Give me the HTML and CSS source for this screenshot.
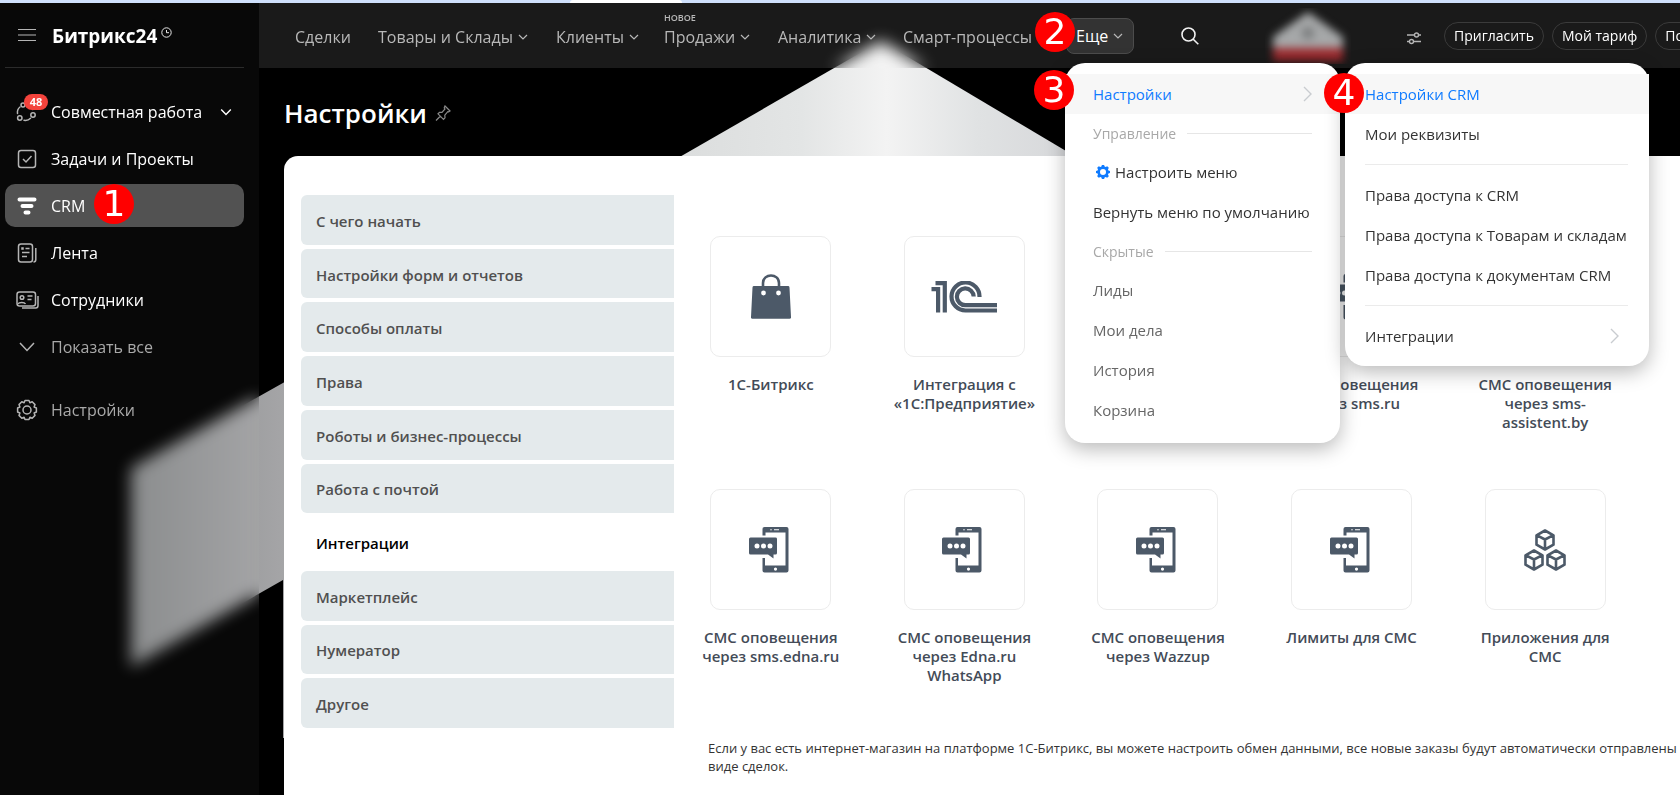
FILE: index.html
```html
<!DOCTYPE html>
<html lang="ru">
<head>
<meta charset="utf-8">
<title>Битрикс24 — Настройки</title>
<link rel="stylesheet" href="styles.css">
</head>
<body>
<svg class="defs" aria-hidden="true">
  <symbol id="chev" viewBox="0 0 10 6"><path d="M1 1l4 4 4-4" fill="none" stroke="currentColor" stroke-width="1.2"/></symbol>
  <symbol id="arrow" viewBox="0 0 9 16"><path d="M1 1l7 7-7 7" fill="none" stroke="currentColor" stroke-width="1.4"/></symbol>
  <symbol id="phone" viewBox="0 0 40 46">
    <path fill="currentColor" fill-rule="evenodd" d="M15.500 0h22a2 2 0 0 1 2 2v41.500a2 2 0 0 1-2 2h-22a2 2 0 0 1-2-2V31h2.500v7.500h20.500V5.500H16.500V8.500h-3V2a2 2 0 0 1 2-2zM22 2a.7.7 0 1 0 0 1.400.7.7 0 1 0 0-1.400zM25 2.200v1h5v-1zM26.500 40.500a1.600 1.600 0 1 0 0 3.200 1.600 1.600 0 1 0 0-3.200z"/>
    <path fill="currentColor" fill-rule="evenodd" d="M1.500 10.500h25a1.500 1.500 0 0 1 1.500 1.500v14a1.500 1.500 0 0 1-1.500 1.500H24.500v4L19 27.500H1.500A1.500 1.500 0 0 1 0 26V12a1.500 1.500 0 0 1 1.500-1.500zM8 16.400a2.500 2.500 0 1 0 0 5 2.500 2.500 0 1 0 0-5zm6.500 0a2.500 2.500 0 1 0 0 5 2.500 2.500 0 1 0 0-5zm6.500 0a2.500 2.500 0 1 0 0 5 2.500 2.500 0 1 0 0-5z"/>
  </symbol>
  <symbol id="cube" viewBox="0 0 20 22"><path d="M10 1.500l8.500 4.800v9.400L10 20.500l-8.500-4.800V6.300zM2 6.300l8 4.200 8-4.200M10 10.500v10" fill="none" stroke="currentColor" stroke-width="2.600" stroke-linejoin="round"/></symbol>
</svg>
<svg class="wallpaper" aria-hidden="true">
  <defs>
    <linearGradient id="roof" x1="0" x2="1"><stop offset="0" stop-color="#d8dada"/><stop offset=".35" stop-color="#e3e5e5"/><stop offset=".52" stop-color="#f3f3f3"/><stop offset=".7" stop-color="#e0e2e3"/><stop offset="1" stop-color="#d0d1d4"/></linearGradient>
    <linearGradient id="wall" x1="0" x2="1"><stop offset="0" stop-color="#888a8b"/><stop offset="1" stop-color="#a6a6a8"/></linearGradient>
  </defs>
  <path d="M881 41L1130 189H624z" fill="url(#roof)"/>
  <path d="M131 468L290 379V738H283V580L131 667z" fill="url(#wall)"/>
</svg>
<div class="browser-edge"><span class="browser-tab"></span></div>
<div class="app">
  <aside class="sidebar">
    <div class="brand">
      <button class="burger" aria-label="Меню"><svg width="18" height="14" viewBox="0 0 18 14"><path d="M0 1.500h18M0 7h18M0 12.500h18" stroke="#b5b5b5" stroke-width="1.200"/></svg></button>
      <a class="logo" href="#">Битрикс24</a>
      <svg class="clock" width="11" height="11" viewBox="0 0 11 11" fill="none" stroke="#e8e8e8"><circle cx="5.500" cy="5.500" r="4.700"/><path d="M5.500 3v2.700H8"/></svg>
    </div>
    <nav class="side-nav">
      <a class="side-link" href="#">
        <span class="side-icon"><svg width="22" height="22" viewBox="0 0 22 22" fill="none" stroke="#b5b5b5" stroke-width="1.500"><circle cx="7" cy="4" r="2"/><circle cx="3.800" cy="17" r="2.200"/><circle cx="17" cy="14" r="2.200"/><path d="M1.500 12.500c-.3-2.500.5-5 2.500-6.500M8 19.300c2.500.4 5-.4 6.500-2M12 3.500c2.500.8 4.300 2.500 4.900 5" stroke-linecap="round"/></svg><span class="counter">48</span></span>
        Совместная работа<svg class="side-chev" width="12" height="8"><use href="#chev"/></svg></a>
      <a class="side-link" href="#">
        <span class="side-icon"><svg width="20" height="20" viewBox="0 0 20 20" fill="none" stroke="#b5b5b5" stroke-width="1.500"><rect x="1.500" y="1.500" width="17" height="17" rx="2.500"/><path d="M6 10l3 3 5.500-6"/></svg></span>
        Задачи и Проекты</a>
      <a class="side-link side-link-active" href="#">
        <span class="side-icon"><svg width="20" height="18" viewBox="0 0 20 18" stroke="#fff" stroke-width="4" stroke-linecap="round"><path d="M2.500 2.500h15M5.500 9h9M8.500 15.500h3"/></svg></span>
        CRM</a>
      <a class="side-link" href="#">
        <span class="side-icon"><svg width="20" height="20" viewBox="0 0 20 20" fill="none" stroke="#b5b5b5" stroke-width="1.500"><rect x="1.500" y="1" width="14" height="18" rx="2.500"/><path d="M18.800 5v11.500c0 1.500-1 2.500-2.300 2.500M8.500 5.500h4M5 9.500h7.500M5 13.500h5"/><rect x="5" y="5" width="1" height="1"/></svg></span>
        Лента</a>
      <a class="side-link" href="#">
        <span class="side-icon"><svg width="23" height="18" viewBox="0 0 23 18" fill="none" stroke="#b5b5b5" stroke-width="1.500"><rect x="1" y="1" width="18.500" height="14" rx="2.500"/><path d="M22 5v9.500c0 1.500-.8 2.500-2.300 2.500H6M11.500 5h5M11.500 8.500h4M2 13c1-2 6.500-2 7.500 0"/><circle cx="6" cy="6.500" r="1.800"/></svg></span>
        Сотрудники</a>
      <a class="side-link side-link-muted" href="#">
        <span class="side-icon"><svg width="16" height="10" viewBox="0 0 16 10"><path d="M1 1l7 7.500L15 1" fill="none" stroke="#b5b5b5" stroke-width="1.500"/></svg></span>
        Показать все</a>
      <a class="side-link side-link-muted side-link-last" href="#">
        <span class="side-icon"><svg width="22" height="22" viewBox="0 0 22 22" fill="none" stroke="#b5b5b5" stroke-width="1.500"><circle cx="11" cy="11" r="4"/><path stroke-linejoin="round" d="M9 1.500h4l.9 2.200 2.300-.9 2.800 2.800-.9 2.400 2.300 1v4l-2.300 1 .9 2.400-2.800 2.800-2.300-.9-.9 2.200H9l-.9-2.200-2.300.9L3 16.400l.9-2.400-2.300-1V9l2.300-1L3 5.600l2.800-2.800 2.300.9z"/></svg></span>
        Настройки</a>
    </nav>
  </aside>
  <div class="content">
    <header class="topbar">
      <nav class="top-nav">
        <a class="top-link" href="#">Сделки</a>
        <a class="top-link" href="#">Товары и Склады<svg width="10" height="6"><use href="#chev"/></svg></a>
        <a class="top-link" href="#">Клиенты<svg width="10" height="6"><use href="#chev"/></svg></a>
        <a class="top-link" href="#"><span class="new-mark">НОВОЕ</span>Продажи<svg width="10" height="6"><use href="#chev"/></svg></a>
        <a class="top-link" href="#">Аналитика<svg width="10" height="6"><use href="#chev"/></svg></a>
        <a class="top-link" href="#">Смарт-процессы</a>
        <button class="more">Еще<svg width="10" height="6"><use href="#chev"/></svg></button>
      </nav>
      <button class="search" aria-label="Поиск"><svg width="18" height="18" viewBox="0 0 18 18" fill="none" stroke="#f2f2f2" stroke-width="1.600"><circle cx="7.500" cy="7.500" r="6.500"/><path d="M12 12l5.300 5.300"/></svg></button>
      <div class="company"><svg width="86" height="56" viewBox="0 0 86 56" aria-hidden="true"><g class="soft"><path d="M43 4L78 29v14H8V29z" fill="#a6a8a9"/><circle cx="43" cy="25" r="6" fill="#77797a"/><path d="M8 40h70v13H8z" fill="#9b2a2e"/></g></svg></div>
      <div class="tools">
        <button class="sliders" aria-label="Вид"><svg width="14" height="13" viewBox="0 0 14 13" fill="none" stroke="#b5b5b5" stroke-width="1.400"><circle cx="9.500" cy="3" r="2"/><circle cx="4.500" cy="9.500" r="2"/><path d="M0 3h7.500M11.500 3H14M0 9.500h2.500M6.500 9.500H14"/></svg></button>
        <button class="pill">Пригласить</button>
        <button class="pill">Мой тариф</button>
        <button class="pill">Помощь</button>
      </div>
    </header>
    <div class="title-row">
      <h1>Настройки</h1>
      <svg width="16" height="16" viewBox="0 0 16 16" fill="none" stroke="#8a8a8a" stroke-width="1.200"><path d="M10 1l5 5-1.300.8-.9-.2-3 3.500.2 2.700-1.500 1.500L3 8.800l1.500-1.500 2.500.1L10 4l-.8-1zM5.500 11L1 15.500"/></svg>
    </div>
    <main class="panel">
      <nav class="tabs">
        <a class="tab" href="#">С чего начать</a>
        <a class="tab" href="#">Настройки форм и отчетов</a>
        <a class="tab" href="#">Способы оплаты</a>
        <a class="tab" href="#">Права</a>
        <a class="tab" href="#">Роботы и бизнес-процессы</a>
        <a class="tab" href="#">Работа с почтой</a>
        <a class="tab tab-active" href="#">Интеграции</a>
        <a class="tab" href="#">Маркетплейс</a>
        <a class="tab" href="#">Нумератор</a>
        <a class="tab" href="#">Другое</a>
      </nav>
      <section class="integrations">
        <div class="cards">
          <a class="card" href="#"><span class="tile"><svg width="40" height="46" viewBox="0 0 40 46"><path d="M12 13V9c0-10 16-10 16 0v4" fill="none" stroke="currentColor" stroke-width="2.600"/><path fill="currentColor" fill-rule="evenodd" d="M3 12h34a1.500 1.500 0 0 1 1.500 1.400L40 43a1.500 1.500 0 0 1-1.500 1.700h-37A1.500 1.500 0 0 1 0 43l1.500-29.600A1.500 1.500 0 0 1 3 12zm9.500 4.600a2.400 2.400 0 1 0 0 4.800 2.400 2.400 0 1 0 0-4.800zm15 0a2.400 2.400 0 1 0 0 4.800 2.400 2.400 0 1 0 0-4.800z"/></svg></span>1С-Битрикс</a>
          <a class="card" href="#"><span class="tile"><svg width="66" height="32" viewBox="0 0 66 32" fill="none" stroke="currentColor" stroke-width="4.200"><path d="M4.500 2.200h9.300v29.300M.5 8.200h6.600v23.300"/><path d="M48.500 16A14 14 0 1 0 34.500 29.500H66M42.700 15.500a8.400 8.400 0 1 0-8.200 8.700H66"/></svg></span>Интеграция с «1С:Предприятие»</a>
          <a class="card" href="#"><span class="tile"><svg class="phone" width="40" height="46"><use href="#phone"/></svg></span>СМС</a>
          <a class="card" href="#"><span class="tile"><svg class="phone" width="40" height="46"><use href="#phone"/></svg></span>СМС оповещения через sms.ru</a>
          <a class="card" href="#"><span class="tile"><svg class="phone" width="40" height="46"><use href="#phone"/></svg></span>СМС оповещения через sms-assistent.by</a>
          <a class="card" href="#"><span class="tile"><svg class="phone" width="40" height="46"><use href="#phone"/></svg></span>СМС оповещения через sms.edna.ru</a>
          <a class="card" href="#"><span class="tile"><svg class="phone" width="40" height="46"><use href="#phone"/></svg></span>СМС оповещения через Edna.ru WhatsApp</a>
          <a class="card" href="#"><span class="tile"><svg class="phone" width="40" height="46"><use href="#phone"/></svg></span>СМС оповещения через Wazzup</a>
          <a class="card" href="#"><span class="tile"><svg class="phone" width="40" height="46"><use href="#phone"/></svg></span>Лимиты для СМС</a>
          <a class="card" href="#"><span class="tile"><svg width="42" height="42" viewBox="0 0 42 42"><use href="#cube" x="11" y="0" width="20" height="22"/><use href="#cube" x="0" y="20" width="20" height="22"/><use href="#cube" x="22" y="20" width="20" height="22"/></svg></span>Приложения для СМС</a>
        </div>
        <p class="note">Если у вас есть интернет-магазин на платформе 1С-Битрикс, вы можете настроить обмен данными, все новые заказы будут автоматически отправлены в Битрикс24 в<br>виде сделок.</p>
      </section>
    </main>
  </div>
</div>
<div class="menu menu-main">
  <a class="menu-item menu-item-current" href="#">Настройки<svg class="menu-arrow" width="9" height="16"><use href="#arrow"/></svg></a>
  <div class="menu-group">Управление</div>
  <a class="menu-item menu-item-icon" href="#"><svg width="14" height="14" viewBox="0 0 14 14"><path fill="#0f7bff" fill-rule="evenodd" d="M5.900 0h2.200l.5 1.600 1 .4L11.200 1.200l1.600 1.600L12 4.400l.4 1 1.600.5v2.200l-1.600.5-.4 1 .8 1.600-1.600 1.600-1.600-.8-1 .4-.5 1.600H5.900l-.5-1.600-1-.4-1.600.8-1.600-1.600.8-1.600-.4-1L0 8.100V5.900l1.600-.5.4-1-.8-1.600 1.600-1.600 1.600.8 1-.4zM7 4a3 3 0 1 0 0 6 3 3 0 1 0 0-6z"/></svg>Настроить меню</a>
  <a class="menu-item" href="#">Вернуть меню по умолчанию</a>
  <div class="menu-group">Скрытые</div>
  <a class="menu-item menu-item-hidden" href="#">Лиды</a>
  <a class="menu-item menu-item-hidden" href="#">Мои дела</a>
  <a class="menu-item menu-item-hidden" href="#">История</a>
  <a class="menu-item menu-item-hidden" href="#">Корзина</a>
</div>
<div class="menu menu-sub">
  <a class="menu-item menu-item-current" href="#">Настройки CRM</a>
  <a class="menu-item" href="#">Мои реквизиты</a>
  <hr>
  <a class="menu-item" href="#">Права доступа к CRM</a>
  <a class="menu-item" href="#">Права доступа к Товарам и складам</a>
  <a class="menu-item" href="#">Права доступа к документам CRM</a>
  <hr>
  <a class="menu-item" href="#">Интеграции<svg class="menu-arrow" width="9" height="16"><use href="#arrow"/></svg></a>
</div>
<span class="step step-1">1</span>
<span class="step step-2">2</span>
<span class="step step-3">3</span>
<span class="step step-4">4</span>
</body>
</html>
```

FILE: styles.css
```css
* { box-sizing: border-box; }
body {
  margin: 0;
  min-height: 100vh;
  display: flex;
  flex-direction: column;
  overflow: hidden;
  position: relative;
  background: #000;
  font-family: "Open Sans", "Noto Sans", sans-serif;
  font-size: 15px;
  color: #333;
}
a { color: inherit; text-decoration: none; }
button { font: inherit; color: inherit; background: none; border: 0; padding: 0; }
svg { flex: none; }
.defs { position: absolute; width: 0; height: 0; }
.wallpaper { position: absolute; top: 0; left: 0; width: 100%; height: 100%; }

.browser-edge { position: relative; height: 3px; background: #cfe0fc; }
.browser-tab { display: block; width: 112px; height: 3px; margin-left: 570px; background: #fff; border-radius: 3px 3px 0 0; }

.app { flex: 1; display: grid; grid-template-columns: 259px minmax(0, 1fr); position: relative; }

/* Sidebar */
.sidebar { padding: 0 15px 0 5px; background: rgba(255, 255, 255, .03); backdrop-filter: blur(8px); color: #fff; }
.brand { display: flex; align-items: center; height: 65px; padding-left: 13px; border-bottom: 1px solid #2b2b2b; }
.burger { display: flex; margin-right: 16px; }
.logo { padding-top: 2px; font-size: 19px; font-weight: 700; line-height: 30px; }
.clock { margin: 0 0 6px 4px; }
.side-nav { display: flex; flex-direction: column; gap: 4px; padding-top: 22px; }
.side-link { display: flex; align-items: center; height: 43px; padding-right: 12px; border-radius: 10px; font-size: 16px; color: #fff; }
.side-link-active { background: #525252; }
.side-link-muted { color: #a9a9a9; }
.side-link-last { margin-top: 16px; }
.side-icon { position: relative; display: flex; justify-content: center; width: 44px; margin-right: 2px; }
.side-chev { margin-left: auto; }
.counter { position: absolute; top: -7px; left: 19px; width: 24px; height: 16px; border-radius: 8px; background: #f4433c; font-size: 11px; font-weight: 700; line-height: 16px; text-align: center; color: #fff; }

/* Top bar */
.content { display: flex; flex-direction: column; min-width: 0; }
.topbar { display: flex; align-items: center; height: 65px; padding-left: 36px; overflow: hidden; background: rgba(255, 255, 255, .1); backdrop-filter: blur(8px); color: #b8b8b8; }
.top-nav { display: grid; grid-template-columns: 83px 178px 108px 114px 125px 163px 68px; align-items: center; flex: none; }
.top-link { position: relative; display: flex; align-items: center; gap: 5px; padding-top: 2px; font-size: 16px; white-space: nowrap; }
.new-mark { position: absolute; top: -12px; left: 0; font-size: 9px; font-weight: 600; line-height: 12px; }
.more { display: flex; align-items: center; gap: 5px; height: 36px; padding-left: 9px; border: 1px solid #4c4c4c; border-radius: 8px; background: #333; font-size: 16px; color: #fff; }
.more svg { color: #b8b8b8; }
.search { display: flex; margin-left: 47px; }
.company { display: flex; margin-left: 66px; }
.soft { filter: blur(4px); }
.tools { display: flex; align-items: center; gap: 8px; margin-left: 56px; flex: none; }
.sliders { display: flex; margin: 6px 15px 0 0; }
.pill { height: 28px; padding: 0 9px; border: 1px solid #3b3b3b; border-radius: 14px; font-size: 14px; font-weight: 500; color: #fff; }

/* Page */
.title-row { display: flex; align-items: center; gap: 8px; height: 88px; padding: 2px 0 0 25px; }
h1 { margin: 0; font-size: 26px; font-weight: 600; line-height: 36px; color: #fff; }
.panel { flex: 1; display: flex; align-items: flex-start; margin-left: 25px; padding: 39px 0 18px 17px; border-top-left-radius: 14px; background: #fff; }
.tabs { flex: none; width: 373px; min-height: 533px; display: grid; grid-auto-rows: 1fr; gap: 4px; }
.tab { display: flex; align-items: center; padding: 2px 15px 0; border-radius: 6px 0 0 6px; background: #e4eaec; font-size: 15px; font-weight: 600; color: #505050; }
.tab-active { background: #fff; color: #000; }
.integrations { flex: 1; min-width: 0; padding-top: 41px; }
.cards { display: grid; grid-template-columns: repeat(5, minmax(0, 1fr)); grid-template-rows: 253px 243px; padding-right: 38px; }
.card { display: flex; flex-direction: column; align-items: center; width: 146px; justify-self: center; font-size: 15px; font-weight: 600; line-height: 19px; text-align: center; color: #434b57; }
.tile { display: flex; align-items: center; justify-content: center; width: 121px; height: 121px; margin-bottom: 18px; border: 1px solid #ececec; border-radius: 10px; color: #4c5968; }
.phone { margin-right: 4px; }
.note { margin: 7px 0 0 34px; font-size: 13px; line-height: 18px; white-space: nowrap; overflow: hidden; color: #333; }

/* Drop-down menus */
.menu { position: absolute; top: 63px; padding: 11px 0 10px; border-radius: 20px; background: #fff; box-shadow: 0 6px 20px rgba(0, 0, 0, .28); }
.menu-main { left: 1065px; width: 275px; padding-bottom: 13px; }
.menu-sub { left: 1345px; width: 304px; }
.menu-item { display: flex; align-items: center; height: 40px; padding: 0 28px; color: #333; white-space: nowrap; }
.menu-item-icon svg { margin: 0 5px 0 3px; }
.menu-item-current { background: #f7f7f7; color: #0f7bff; }
.menu-item-hidden { color: #666; }
.menu-sub .menu-item { padding: 0 30px 0 20px; }
.menu-arrow { margin-left: auto; color: #c9ccd0; }
.menu-group { display: flex; align-items: center; gap: 11px; height: 38px; padding: 0 28px; font-size: 14px; color: #a8a8a8; }
.menu-group::after { content: ""; flex: 1; height: 1px; background: #e6e6e6; }
.menu hr { height: 1px; margin: 10px 21px 10px 20px; border: 0; background: #ebebeb; }

/* Numbered step markers */
.step { position: absolute; width: 40px; height: 40px; border-radius: 50%; background: #f00; font: 36px/40px "DejaVu Sans", sans-serif; text-align: center; color: #fff; }
.step-1 { left: 94px; top: 184px; }
.step-2 { left: 1035px; top: 12px; }
.step-3 { left: 1034px; top: 70px; }
.step-4 { left: 1324px; top: 73px; }
```
